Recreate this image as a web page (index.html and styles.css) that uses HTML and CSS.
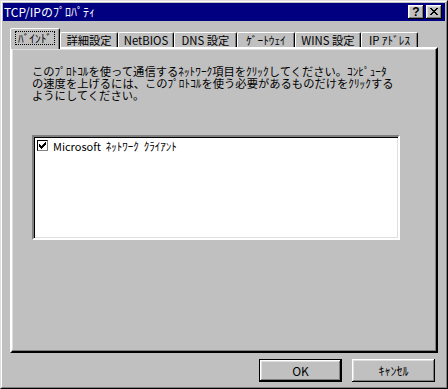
FILE: index.html
```html
<!DOCTYPE html>
<html lang="ja">
<head>
    <meta charset="UTF-8">
    <title>TCP/IPのﾌﾟﾛﾊﾟﾃｨ</title>
    <link rel="stylesheet" href="styles.css">
</head>
<body>

    <div class="window">
        <div class="frame">
            <!-- Barra de título -->
            <div class="titlebar">
                <span class="title">TCP/IPのﾌﾟﾛﾊﾟﾃｨ</span>
                <div class="caption-buttons">
                    <button class="cap-btn help">?</button>
                    <button class="cap-btn close">
                        <svg width="8" height="7" viewBox="0 0 8 7">
                            <path d="M0 0h2v1h1v1h2v-1h1v-1h2v1h-1v1h-1v1h-1v1h1v1h1v1h1v1h-2v-1h-1v-1h-2v1h-1v1h-2v-1h1v-1h1v-1h1v-1h-1v-1h-1v-1h-1z" fill="#000"/>
                        </svg>
                    </button>
                </div>
            </div>

            <div class="content">
                <!-- Pestañas -->
                <div class="tabs">
                    <div class="tab active w-bind"><span class="focus">ﾊﾞｲﾝﾄﾞ</span></div>
                    <div class="tab w-adv">詳細設定</div>
                    <div class="tab w-netbios">NetBIOS</div>
                    <div class="tab w-dns">DNS 設定</div>
                    <div class="tab w-gw">ｹﾞｰﾄｳｪｲ</div>
                    <div class="tab w-wins">WINS 設定</div>
                    <div class="tab w-ip">IP ｱﾄﾞﾚｽ</div>
                </div>

                <div class="panel">
                    <p class="desc">このﾌﾟﾛﾄｺﾙを使って通信するﾈｯﾄﾜｰｸ項目をｸﾘｯｸしてください。ｺﾝﾋﾟｭｰﾀ<br>の速度を上げるには、このﾌﾟﾛﾄｺﾙを使う必要があるものだけをｸﾘｯｸする<br>ようにしてください。</p>

                    <div class="listbox">
                        <div class="item">
                            <span class="check">
                                <svg width="7" height="7" viewBox="0 0 7 7">
                                    <path d="M0 2h1v1h1v1h1v-1h1v-1h1v-1h1v-1h1v3h-1v1h-1v1h-1v1h-1v1h-1v-1h-1v-1h-1z" fill="#000"/>
                                </svg>
                            </span>
                            <span class="item-label">Microsoft&nbsp; ﾈｯﾄﾜｰｸ&nbsp; ｸﾗｲｱﾝﾄ</span>
                        </div>
                    </div>
                </div>

                <!-- Botones -->
                <div class="actions">
                    <button class="btn default">OK</button>
                    <button class="btn">ｷｬﾝｾﾙ</button>
                </div>
            </div>
        </div>
    </div>

</body>
</html>
```

FILE: styles.css
```css
* {
    box-sizing: border-box;
}

body {
    margin: 0;
    background: #c0c0c0;
    font-family: "Noto Sans CJK JP", "Liberation Sans", sans-serif;
    font-size: 12px;
    color: #000;
}

.window {
    width: 448px;
    height: 389px;
    background: #c0c0c0;
    border: 1px solid;
    border-color: #dfdfdf #000 #000 #dfdfdf;
}

.frame {
    height: 100%;
    border: 1px solid;
    border-color: #fff #808080 #808080 #fff;
    padding: 1px;
    display: flex;
    flex-direction: column;
}

.titlebar {
    height: 18px;
    background: #000080;
    color: #fff;
    display: flex;
    align-items: center;
    justify-content: space-between;
    padding: 0 3px 0 1px;
}

.title {
    line-height: 14px;
}

.caption-buttons {
    display: flex;
    gap: 2px;
}

.cap-btn {
    width: 16px;
    height: 14px;
    padding: 0;
    border: none;
    background: #c0c0c0;
    box-shadow: inset -1px -1px #000, inset 1px 1px #fff, inset -2px -2px #808080, inset 2px 2px #dfdfdf;
    display: flex;
    align-items: center;
    justify-content: center;
    font-family: "Liberation Sans", sans-serif;
    font-weight: bold;
    font-size: 12px;
    line-height: 12px;
    color: #000;
}

.cap-btn svg {
    margin-top: -1px;
}

.content {
    flex: 1;
    display: flex;
    flex-direction: column;
    padding: 7px 7px 4px 7px;
}

.tabs {
    display: flex;
    align-items: flex-end;
}

.tab {
    height: 15px;
    border: 1px solid;
    border-bottom: none;
    border-color: #fff #000 transparent #fff;
    border-radius: 2px 2px 0 0;
    box-shadow: inset -1px 0 #808080;
    display: flex;
    align-items: center;
    justify-content: center;
    font-size: 11.3px;
    line-height: 12px;
    white-space: nowrap;
}

.tab.active {
    height: 21px;
    margin-bottom: -2px;
    background: #c0c0c0;
    position: relative;
    z-index: 1;
    align-items: flex-start;
    padding-top: 2px;
}

.focus {
    border: 1px dotted #000;
    padding: 0 2px;
    line-height: 12px;
}

.w-bind { width: 50px; }
.w-adv { width: 58px; }
.w-netbios { width: 56px; }
.w-dns { width: 63px; }
.w-gw { width: 58px; }
.w-wins { width: 66px; }
.w-ip { width: 57px; }

.panel {
    flex: 1;
    border: 2px solid;
    border-color: #fff #000 #000 #fff;
    box-shadow: inset -1px -1px #808080, inset 1px 1px #dfdfdf;
    padding: 16px 20px 0 20px;
}

.desc {
    margin: 0;
    font-size: 11.3px;
    line-height: 12px;
    white-space: nowrap;
}

.listbox {
    margin-top: 34px;
    width: 368px;
    height: 105px;
    background: #fff;
    border: 2px solid;
    border-color: #808080 #fff #fff #808080;
    box-shadow: inset 1px 1px #000, inset -1px -1px #dfdfdf;
    padding: 2px 3px;
}

.item {
    display: flex;
    align-items: center;
    gap: 5px;
    height: 13px;
}

.check {
    width: 11px;
    height: 11px;
    border: 1px solid;
    border-color: #000 #808080 #808080 #000;
    background: #fff;
    display: flex;
    align-items: center;
    justify-content: center;
}

.item-label {
    font-size: 11px;
    line-height: 12px;
}

.actions {
    display: flex;
    justify-content: flex-end;
    gap: 10px;
    margin-top: 6px;
    padding-right: 3px;
}

.btn {
    width: 83px;
    height: 23px;
    padding: 0;
    border: none;
    background: #c0c0c0;
    font-family: inherit;
    font-size: 12px;
    color: #000;
    box-shadow: inset -1px -1px #000, inset 1px 1px #fff, inset -2px -2px #808080, inset 2px 2px #dfdfdf;
}

.btn.default {
    border: 1px solid #000;
}
```
